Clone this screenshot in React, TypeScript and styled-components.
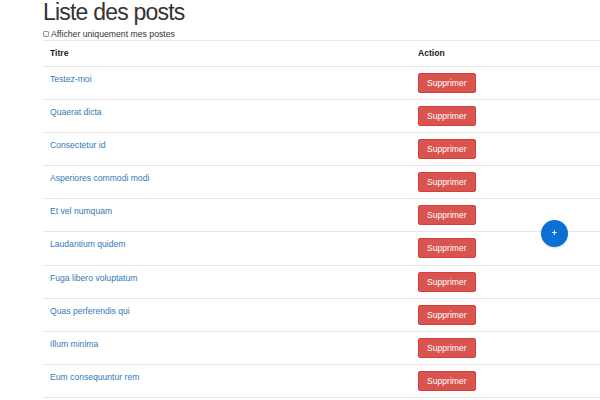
import React, { useState } from "react";
import styled, { createGlobalStyle } from "styled-components";

const posts = [
	"Testez-moi",
	"Quaerat dicta",
	"Consectetur id",
	"Asperiores commodi modi",
	"Et vel numquam",
	"Laudantium quidem",
	"Fuga libero voluptatum",
	"Quas perferendis qui",
	"Illum minima",
	"Eum consequuntur rem",
];

function App() {
	const [onlyMine, setOnlyMine] = useState(false);

	return (
		<>
			<GlobalStyle />
			<Page>
				<Title>Liste des posts</Title>
				<Filter>
					<input type="checkbox" checked={onlyMine} onChange={() => setOnlyMine((prev) => !prev)} />
					<span>Afficher uniquement mes postes</span>
				</Filter>
				<Table>
					<thead>
						<tr>
							<th className="title">Titre</th>
							<th>Action</th>
						</tr>
					</thead>
					<tbody>
						{posts.map((post) => (
							<tr key={post}>
								<td>
									<PostLink href="#">{post}</PostLink>
								</td>
								<td>
									<DeleteButton>Supprimer</DeleteButton>
								</td>
							</tr>
						))}
					</tbody>
				</Table>
			</Page>
			<Fab>+</Fab>
		</>
	);
}

export default App;

const GlobalStyle = createGlobalStyle`
	html, body {
		margin: 0;
		padding: 0;
		background: #fff;
	}

	body {
		font-family: "Liberation Sans", Arial, sans-serif;
		color: #333;
		overflow: hidden;
	}
`;

const Page = styled.div`
	padding-left: 43px;
`;

const Title = styled.h1`
	margin: 0 0 4px;
	padding-top: 1px;
	font-size: 23px;
	line-height: 23px;
	font-weight: 400;
	letter-spacing: -0.8px;
	color: #333;
`;

const Filter = styled.label`
	display: flex;
	align-items: center;
	gap: 1px;
	height: 12px;
	font-size: 8.7px;
	line-height: 12px;
	color: #333;

	input {
		appearance: none;
		width: 6px;
		height: 6px;
		margin: 0 1px 0 0;
		border: 1px solid #9a9a9a;
		border-radius: 1px;
		background: linear-gradient(#fff, #e8e8e8);
	}
`;

const Table = styled.table`
	width: 100%;
	border-collapse: collapse;
	font-size: 8.6px;
	line-height: 12px;

	th {
		text-align: left;
		font-weight: 700;
		padding: 6px 7px 7px;
		border-top: 1px solid #e8e8e8;
		color: #222;
	}

	th.title {
		width: 354px;
	}

	td {
		vertical-align: top;
		padding: 6px 7px 6.1px;
		border-top: 1px solid #e5e5e5;
	}

	tbody tr:last-child td {
		border-bottom: 1px solid #e5e5e5;
	}
`;

const PostLink = styled.a`
	color: #337ab7;
	text-decoration: none;

	&:visited,
	&:focus {
		color: #337ab7;
	}
`;

const DeleteButton = styled.button`
	display: block;
	height: 20px;
	padding: 0 8px;
	border: 1px solid #d43f3a;
	border-radius: 2px;
	background: #d9534f;
	color: #fff;
	font-family: "Liberation Sans", Arial, sans-serif;
	font-size: 8.6px;
	line-height: 18px;
	cursor: pointer;
`;

const Fab = styled.button`
	position: fixed;
	left: 541px;
	top: 220px;
	width: 27px;
	height: 27px;
	padding: 0;
	border: none;
	border-radius: 50%;
	background: #0b6fd6;
	color: #fff;
	font-family: "Liberation Sans", Arial, sans-serif;
	font-size: 9px;
	font-weight: 700;
	line-height: 27px;
	text-align: center;
	box-shadow: 0 1px 2px rgba(0, 0, 0, 0.15);
`;
